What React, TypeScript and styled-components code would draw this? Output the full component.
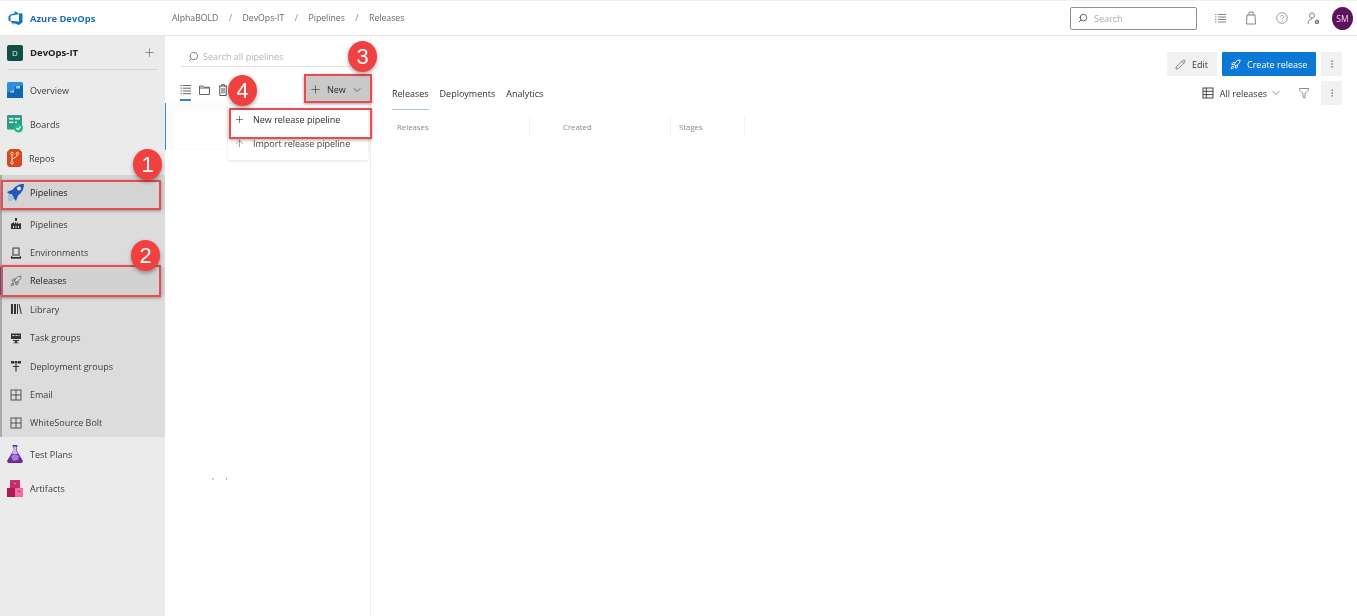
import React from "react";
import styled, { createGlobalStyle } from "styled-components";
import { Plus, ChevronDown, Search, ArrowUp, Pencil, Rocket, MoreVertical, Filter } from "lucide-react";

const Global = createGlobalStyle`
  html, body { margin: 0; padding: 0; background: #fff; }
  body { font-family: "Open Sans", "Noto Sans", "Liberation Sans", sans-serif; color: #333; overflow: hidden; filter: blur(0.3px); }
  * { box-sizing: border-box; }
`;

const Page = styled.div`
  position: relative;
  width: 1357px;
  height: 616px;
  overflow: hidden;
  display: flex;
  flex-direction: column;
`;

/* Header */
const Header = styled.header`
  height: 36px;
  flex: none;
  display: flex;
  align-items: center;
  border-bottom: 1px solid #e6e6e6;
  border-top: 1px solid #f0f0f0;
  padding-left: 8px;
  padding-right: 4px;
`;
const Brand = styled.div`
  width: 164px;
  display: flex;
  align-items: center;
  gap: 7px;
  font-size: 9.4px;
  font-weight: 700;
  color: #1a6fb8;
`;
const Crumbs = styled.nav`
  display: flex;
  align-items: center;
  font-size: 8.7px;
  color: #666;
  flex: 1;
`;
const Sep = styled.span`
  margin: 0 10.5px;
  color: #888;
`;
const HeaderSearch = styled.div`
  width: 127px;
  height: 23px;
  border: 1px solid #8f8f8f;
  border-radius: 2px;
  display: flex;
  align-items: center;
  gap: 6px;
  padding-left: 7px;
  font-size: 9px;
  color: #aaa;
  margin-right: 17px;
`;
const HeaderIcons = styled.div`
  display: flex;
  align-items: center;
  gap: 19px;
  color: #777;
  margin-right: 12px;
`;
const Avatar = styled.div`
  width: 21px;
  height: 23px;
  border-radius: 50%;
  background: #5c125c;
  color: #f3d9ee;
  font-size: 8.5px;
  display: flex;
  align-items: center;
  justify-content: center;
`;

const Body = styled.div`
  flex: 1;
  display: flex;
  min-height: 0;
`;

/* Sidebar */
const Sidebar = styled.aside`
  width: 165px;
  flex: none;
  background: #ebebeb;
  display: flex;
  flex-direction: column;
`;
const Project = styled.div`
  height: 34px;
  margin: 0 7px 3px 7px;
  display: flex;
  align-items: center;
  border-bottom: 1px solid #d4d4d4;
  font-size: 9.5px;
  font-weight: 700;
  gap: 7px;
  color: #222;
`;
const ProjectTile = styled.div`
  width: 16px;
  height: 16px;
  border-radius: 2px;
  background: #0f4f48;
  color: #dfeeea;
  font-size: 8px;
  font-weight: 400;
  display: flex;
  align-items: center;
  justify-content: center;
`;
const ProjectAdd = styled.div`
  margin-left: auto;
  margin-right: 2px;
  color: #444;
  display: flex;
`;
const NavItem = styled.div`
  height: 34px;
  display: flex;
  align-items: center;
  gap: 7px;
  padding-left: 7px;
  font-size: 9px;
  color: #3c3c3c;
`;
const Group = styled.div`
  background: #dcdcdc;
  border-left: 2px solid #a9a9a9;
`;
const GroupHead = styled(NavItem)`
  padding-left: 5px;
  gap: 6px;
  background: #d4d4d4;
  color: #222;
  height: 35px;
`;
const SubItem = styled.div<{ $active?: boolean }>`
  height: 28.4px;
  display: flex;
  align-items: center;
  padding-left: 8px;
  gap: 8px;
  font-size: 9px;
  color: ${(p) => (p.$active ? "#222" : "#3c3c3c")};
  background: ${(p) => (p.$active ? "#d2d2d2" : "transparent")};
  box-shadow: ${(p) => (p.$active ? "-2px 0 0 #2f6fb8" : "none")};
  & svg { color: #3a3a3a; flex: none; }
`;

/* Pipelines panel */
const ListPanel = styled.section`
  width: 206px;
  flex: none;
  border-right: 1px solid #efefef;
  display: flex;
  flex-direction: column;
  position: relative;
`;
const PanelSearch = styled.div`
  margin: 11px 20px 0 16px;
  height: 20px;
  border-bottom: 1px solid #e3e3e3;
  display: flex;
  align-items: center;
  gap: 4px;
  padding-left: 7px;
  font-size: 9px;
  color: #b5b5b5;
`;
const Toolbar = styled.div`
  height: 36px;
  padding-top: 9px;
  display: flex;
  align-items: center;
  padding-left: 15px;
  gap: 8px;
  color: #555;
`;
const ToolTab = styled.div`
  display: flex;
  align-items: center;
  border-bottom: 2px solid #3b82c4;
  height: 21px;
  margin-top: 1px;
`;
const NewButton = styled.div`
  margin-left: auto;
  width: 66px;
  height: 27px;
  background: #c9c9c9;
  display: flex;
  align-items: center;
  gap: 5px;
  padding-left: 5px;
  font-size: 9px;
  color: #2a2a2a;
`;
const ListArea = styled.div`
  height: 47px;
  background: #fbfbfb;
  border-left: 1px solid #3f86c6;
  padding: 8px 0 1px 8px;
`;
const ListCard = styled.div`
  width: 54px;
  height: 38px;
  background: #fff;
`;
const Menu = styled.div`
  position: absolute;
  left: 63px;
  top: 68px;
  width: 140px;
  height: 56px;
  background: #fff;
  box-shadow: 0 1px 3px rgba(0, 0, 0, 0.12);
  padding-top: 1px;
`;
const MenuItem = styled.div`
  height: 29px;
  display: flex;
  align-items: center;
  gap: 8px;
  padding-left: 6px;
  font-size: 9px;
  color: #2a2a2a;
  white-space: nowrap;
  &:last-child { height: 18px; color: #444; }
`;
const Specks = styled.div`
  position: absolute;
  left: 47px;
  top: 440px;
  display: flex;
  gap: 12px;
  font-size: 8px;
  line-height: 1;
  color: #666;
`;

/* Main */
const Main = styled.main`
  flex: 1;
  display: flex;
  flex-direction: column;
  padding: 16px 15px 0 21px;
`;
const TopActions = styled.div`
  display: flex;
  justify-content: flex-end;
  gap: 5px;
  height: 24px;
`;
const ActionBtn = styled.div`
  height: 24px;
  width: 50px;
  background: #f1f1f1;
  display: flex;
  align-items: center;
  gap: 6px;
  padding-left: 8px;
  font-size: 9px;
  color: #333;
`;
const PrimaryBtn = styled.div`
  height: 24px;
  width: 94px;
  background: #0a78d4;
  color: #fff;
  display: flex;
  align-items: center;
  gap: 6px;
  padding-left: 8px;
  font-size: 9px;
  border-radius: 1px;
`;
const KebabBtn = styled.div`
  width: 21px;
  height: 24px;
  background: #f1f1f1;
  display: flex;
  align-items: center;
  justify-content: center;
  color: #555;
`;
const TabRow = styled.div`
  display: flex;
  align-items: flex-start;
  margin-top: 5px;
`;
const Tabs = styled.div`
  display: flex;
  gap: 11px;
  flex: 1;
`;
const Tab = styled.div<{ $active?: boolean }>`
  height: 29px;
  display: flex;
  align-items: center;
  font-size: 9px;
  color: #333;
  padding-bottom: 3px;
  border-bottom: 1px solid ${(p) => (p.$active ? "#a8c8e4" : "transparent")};
  font-weight: ${(p) => (p.$active ? 500 : 400)};
`;
const ViewBar = styled.div`
  display: flex;
  align-items: center;
  font-size: 9px;
  color: #333;
  & > svg { flex: none; }
`;
const ViewLabel = styled.span`
  margin: 0 3px 0 6px;
`;
const FilterSlot = styled.span`
  display: flex;
  margin: 0 11px 0 16px;
  color: #333;
`;
const ColHeads = styled.div`
  display: flex;
  height: 20px;
  margin-top: 7px;
  font-size: 7.8px;
  color: #8a8a8a;
`;
const Col = styled.div<{ $w: number; $pl: number }>`
  width: ${(p) => p.$w}px;
  padding-left: ${(p) => p.$pl}px;
  display: flex;
  align-items: center;
  border-right: 1px solid #f0f0f0;
`;

/* Annotations */
const RedBox = styled.div<{ $x: number; $y: number; $w: number; $h: number }>`
  position: absolute;
  left: ${(p) => p.$x}px;
  top: ${(p) => p.$y}px;
  width: ${(p) => p.$w}px;
  height: ${(p) => p.$h}px;
  border: 2px solid #e64c50;
  box-shadow: 0 1px 3px rgba(0, 0, 0, 0.35);
  pointer-events: none;
`;
const Badge = styled.div<{ $x: number; $y: number }>`
  position: absolute;
  left: ${(p) => p.$x}px;
  top: ${(p) => p.$y}px;
  width: 29px;
  height: 31px;
  border-radius: 50%;
  background: #f0403f;
  color: #fff;
  font-family: "Liberation Sans", Arial, sans-serif;
  font-size: 22px;
  display: flex;
  align-items: center;
  justify-content: center;
  box-shadow: 0 2px 4px rgba(0, 0, 0, 0.35);
`;

/* Drawn product icons */
const AzureLogo = () => (
  <svg width="15" height="16" viewBox="0 0 16 16">
    <path d="M15.5 3.2v9.2l-3.8 3-5.9-2.1v2.1L2.5 11l9.2.7V3zM12.4 3.6 7.2.4v2.4L2 4.4.5 6.4v4.2l2.2 1V5.7z" fill="#1373c4" />
  </svg>
);
const OverviewIcon = () => (
  <svg width="16" height="16" viewBox="0 0 16 16">
    <rect width="16" height="16" rx="1.5" fill="#2f8fdc" />
    <path d="M0 16V10.5L8 8V5l8-2v13z" fill="#0f66b3" />
    <path d="M9 4.6l4-1v2.8H9zM3 9.4l4-1.2v2.4H3z" fill="#9fd0f4" />
  </svg>
);
const BoardsIcon = () => (
  <svg width="16" height="18" viewBox="0 0 16 18">
    <rect width="15" height="14.5" rx="1.2" fill="#2f9c86" />
    <rect x="2" y="3" width="4.5" height="1.6" fill="#d1eee5" />
    <rect x="8" y="3" width="5" height="1.6" fill="#d1eee5" />
    <rect x="2" y="6.5" width="4.5" height="1.6" fill="#d1eee5" />
    <rect x="8" y="6.5" width="2" height="1.6" fill="#d1eee5" />
    <circle cx="11.5" cy="13" r="4.5" fill="#1fb98a" />
    <path d="M9.4 13l1.6 1.7 2.6-3.2" stroke="#fff" strokeWidth="1.2" fill="none" />
  </svg>
);
const ReposIcon = () => (
  <svg width="15" height="18" viewBox="0 0 15 18">
    <path d="M3 0h9l3 3v13l-2 2H2l-2-2V3z" fill="#d9471d" />
    <path d="M5 5v8M10.5 5.5c0 3.6-5.500 3-5.500 5.500" stroke="#fbd9c8" strokeWidth="1" fill="none" />
    <circle cx="5" cy="4.500" r="1.300" fill="none" stroke="#fbd9c8" />
    <circle cx="10.500" cy="4.500" r="1.300" fill="none" stroke="#fbd9c8" />
    <circle cx="5" cy="13.800" r="1.300" fill="none" stroke="#fbd9c8" />
  </svg>
);
const PipelinesIcon = () => (
  <svg width="17" height="18" viewBox="0 0 17 18">
    <path d="M6 5.500C8 2 12 0 17 0c0 5-2 9-6 11.500L9 17l-2.500-3L3 10.500 0 8z" fill="#2456b8" />
    <circle cx="12" cy="4.500" r="2" fill="#e2ecfb" />
    <path d="M1 10h4l2 4-2 3H1z" fill="#a8c0ea" />
  </svg>
);
const TestPlansIcon = () => (
  <svg width="16" height="18" viewBox="0 0 16 18">
    <path d="M5.500 0h5v1.500H10V6l6 10-1 2H1L0 16 6 6V1.500h-.5z" fill="#6a2aa8" />
    <path d="M6.600 1.500h2.800V6L11 9H5z" fill="#c9b2e6" />
    <path d="M4 11l4-2 4 2-1 4-5 1z" fill="#a77ad8" />
  </svg>
);
const ArtifactsIcon = () => (
  <svg width="16" height="17" viewBox="0 0 16 17">
    <rect x="3" y="0" width="10" height="8" fill="#c4306c" />
    <rect x="0" y="8" width="8" height="9" fill="#b3184f" />
    <rect x="8" y="8" width="8" height="9" fill="#ef6fa4" />
    <rect x="7" y="3" width="2" height="1" fill="#e98ab2" />
    <rect x="11" y="11" width="2" height="1" fill="#b3184f" />
  </svg>
);
const GridIcon = () => (
  <svg width="12" height="12" viewBox="0 0 12 12" fill="none" stroke="#444" strokeWidth="0.9">
    <rect x="1" y="1" width="10" height="10" />
    <path d="M6 1v10M1 6h10" />
  </svg>
);
const FactoryIcon = () => (
  <svg width="12" height="12" viewBox="0 0 12 12" fill="#333">
    <path d="M5 0h2v3H5zM1 6l3-2v2l2-2v2l2-2v2l3-1v6H1z" />
    <path d="M3 8h1v2H3zM5.500 8h1v2h-1zM8 8h1v2H8z" fill="#dcdcdc" />
  </svg>
);
const EnvironmentIcon = () => (
  <svg width="12" height="12" viewBox="0 0 12 12" fill="none" stroke="#333" strokeWidth="1">
    <rect x="3" y="1" width="6" height="7" />
    <path d="M2.500 8.500 1 10.500h10l-1.500-2M1 11.200h10" />
  </svg>
);
const LibraryIcon = () => (
  <svg width="12" height="12" viewBox="0 0 12 12" fill="#333">
    <path d="M1 1h2v10H1zM4 1h2v10H4z" />
    <path d="M7 1h1v10H7z" />
    <path d="M8.600 1.200l1-.3 2.200 9.700-1 .3z" />
  </svg>
);
const TaskGroupIcon = () => (
  <svg width="12" height="12" viewBox="0 0 12 12" fill="#333">
    <path d="M1 1.500h10v5.500H1z" />
    <path d="M2.500 3h2v1h-2zM5.500 3h2v1h-2zM8.500 3h1v1h-1z" fill="#dcdcdc" />
    <path d="M3 8h6v1H7v1.500h1.500v.7h-5v-.7H5V9H3z" />
  </svg>
);
const DeployGroupIcon = () => (
  <svg width="12" height="12" viewBox="0 0 12 12" fill="#333">
    <path d="M1 1h3v2.600H1zM4.600 1h2.800v2.600H4.600zM8 1h3v2.600H8z" />
    <path d="M5.400 4h1.200v2H9v1H6.600v4.500H5.400V7H3V6h2.400z" />
  </svg>
);
const MenuListIcon = () => (
  <svg width="12" height="12" viewBox="0 0 12 12" fill="none" stroke="#777" strokeWidth="0.9">
    <path d="M4 2.500h8M4 5h8M4 7.500h8M4 10h8M1 2.500h1.500M1 5h1.500M1 7.500h1.500M1 10h1.500" />
  </svg>
);
const BagIcon = () => (
  <svg width="12" height="14" viewBox="0 0 12 14" fill="none" stroke="#777" strokeWidth="0.9">
    <path d="M2 4h8l.5 9h-9zM4 4V1h4v3" />
  </svg>
);
const HelpIcon = () => (
  <svg width="12" height="12" viewBox="0 0 12 12" fill="none" stroke="#888" strokeWidth="0.8">
    <circle cx="6" cy="6" r="5.300" />
    <path d="M4.400 4.800c0-2.200 3.300-2 3.300 0 0 1.400-1.700 1.300-1.700 2.700M6 8.500v1" />
  </svg>
);
const UserGearIcon = () => (
  <svg width="13" height="13" viewBox="0 0 13 13" fill="none" stroke="#777" strokeWidth="0.9">
    <circle cx="5" cy="3.500" r="2.600" />
    <path d="M1 12c0-3 1.500-5 4-5" />
    <circle cx="10" cy="10" r="1.500" strokeWidth="1.400" />
  </svg>
);
const ListTabIcon = () => (
  <svg width="11" height="11" viewBox="0 0 11 11" fill="none" stroke="#555" strokeWidth="0.9">
    <path d="M3 1.500h8M3 4.200h8M3 7h8M3 9.700h8M.5 1.500H2M.5 4.200H2M.5 7H2M.5 9.700H2" />
  </svg>
);
const FolderIcon = () => (
  <svg width="11" height="10" viewBox="0 0 11 10" fill="none" stroke="#555" strokeWidth="0.9">
    <path d="M.5 1h3.500l1 1.300h5.500V9.500H.5zM.5 3h10" />
  </svg>
);
const TrashIcon = () => (
  <svg width="10" height="12" viewBox="0 0 10 12" fill="none" stroke="#555" strokeWidth="1">
    <path d="M1 2h8M3.500 2V.7h3V2M1.800 2v9.500h6.400V2M4 4v5.500M6 4v5.500" />
  </svg>
);
const TableIcon = () => (
  <svg width="12" height="12" viewBox="0 0 12 12" fill="none" stroke="#333" strokeWidth="0.9">
    <rect x="1" y="1" width="10" height="10" />
    <path d="M1 4.300h10M1 7.600h10M4.300 1v10" />
  </svg>
);

const subs = [
  { label: "Pipelines", icon: <FactoryIcon /> },
  { label: "Environments", icon: <EnvironmentIcon /> },
  { label: "Releases", icon: <Rocket size={12} strokeWidth={1.2} />, active: true },
  { label: "Library", icon: <LibraryIcon /> },
  { label: "Task groups", icon: <TaskGroupIcon /> },
  { label: "Deployment groups", icon: <DeployGroupIcon /> },
  { label: "Email", icon: <GridIcon /> },
  { label: "WhiteSource Bolt", icon: <GridIcon /> },
];

export default function App() {
  return (
    <Page>
      <Global />
      <Header>
        <Brand><AzureLogo />Azure DevOps</Brand>
        <Crumbs>
          AlphaBOLD<Sep>/</Sep>DevOps-IT<Sep>/</Sep>Pipelines<Sep>/</Sep>Releases
        </Crumbs>
        <HeaderSearch><Search size={10} color="#444" style={{ transform: "scaleX(-1)" }} />Search</HeaderSearch>
        <HeaderIcons>
          <MenuListIcon />
          <BagIcon />
          <HelpIcon />
          <UserGearIcon />
        </HeaderIcons>
        <Avatar>SM</Avatar>
      </Header>
      <Body>
        <Sidebar>
          <Project>
            <ProjectTile>D</ProjectTile>DevOps-IT
            <ProjectAdd><Plus size={13} strokeWidth={1} /></ProjectAdd>
          </Project>
          <NavItem><OverviewIcon />Overview</NavItem>
          <NavItem><BoardsIcon />Boards</NavItem>
          <NavItem><ReposIcon />Repos</NavItem>
          <Group>
            <GroupHead><PipelinesIcon />Pipelines</GroupHead>
            {subs.map((s) => (
              <SubItem key={s.label} $active={s.active}>{s.icon}{s.label}</SubItem>
            ))}
          </Group>
          <NavItem><TestPlansIcon />Test Plans</NavItem>
          <NavItem><ArtifactsIcon />Artifacts</NavItem>
        </Sidebar>
        <ListPanel>
          <PanelSearch><Search size={11} color="#777" style={{ transform: "scaleX(-1)" }} />Search all pipelines</PanelSearch>
          <Toolbar>
            <ToolTab><ListTabIcon /></ToolTab>
            <FolderIcon />
            <TrashIcon />
            <NewButton>
              <Plus size={13} strokeWidth={1.1} />New<ChevronDown size={12} strokeWidth={1.2} />
            </NewButton>
          </Toolbar>
          <ListArea><ListCard /></ListArea>
          <Menu>
            <MenuItem><Plus size={11} strokeWidth={1.2} />New release pipeline</MenuItem>
            <MenuItem><ArrowUp size={11} strokeWidth={1.1} />Import release pipeline</MenuItem>
          </Menu>
          <Specks><span>'</span><span>'</span></Specks>
        </ListPanel>
        <Main>
          <TopActions>
            <ActionBtn><Pencil size={11} strokeWidth={1.2} />Edit</ActionBtn>
            <PrimaryBtn><Rocket size={11} />Create release</PrimaryBtn>
            <KebabBtn><MoreVertical size={10} strokeWidth={1.2} /></KebabBtn>
          </TopActions>
          <TabRow>
            <Tabs>
              <Tab $active>Releases</Tab>
              <Tab>Deployments</Tab>
              <Tab>Analytics</Tab>
            </Tabs>
            <ViewBar>
              <TableIcon />
              <ViewLabel>All releases</ViewLabel>
              <ChevronDown size={12} strokeWidth={1.1} />
              <FilterSlot><Filter size={12} strokeWidth={1.1} /></FilterSlot>
              <KebabBtn><MoreVertical size={10} strokeWidth={1.2} /></KebabBtn>
            </ViewBar>
          </TabRow>
          <ColHeads>
            <Col $w={138} $pl={5}>Releases</Col>
            <Col $w={141} $pl={33}>Created</Col>
            <Col $w={74} $pl={8}>Stages</Col>
          </ColHeads>
        </Main>
      </Body>
      <RedBox $x={1} $y={180} $w={160} $h={30} />
      <RedBox $x={1} $y={265} $w={160} $h={32} />
      <RedBox $x={304} $y={74} $w={68} $h={29} />
      <RedBox $x={229} $y={108} $w={143} $h={31} />
      <Badge $x={133} $y={149}>1</Badge>
      <Badge $x={131} $y={240}>2</Badge>
      <Badge $x={348} $y={41}>3</Badge>
      <Badge $x={228} $y={75}>4</Badge>
    </Page>
  );
}
